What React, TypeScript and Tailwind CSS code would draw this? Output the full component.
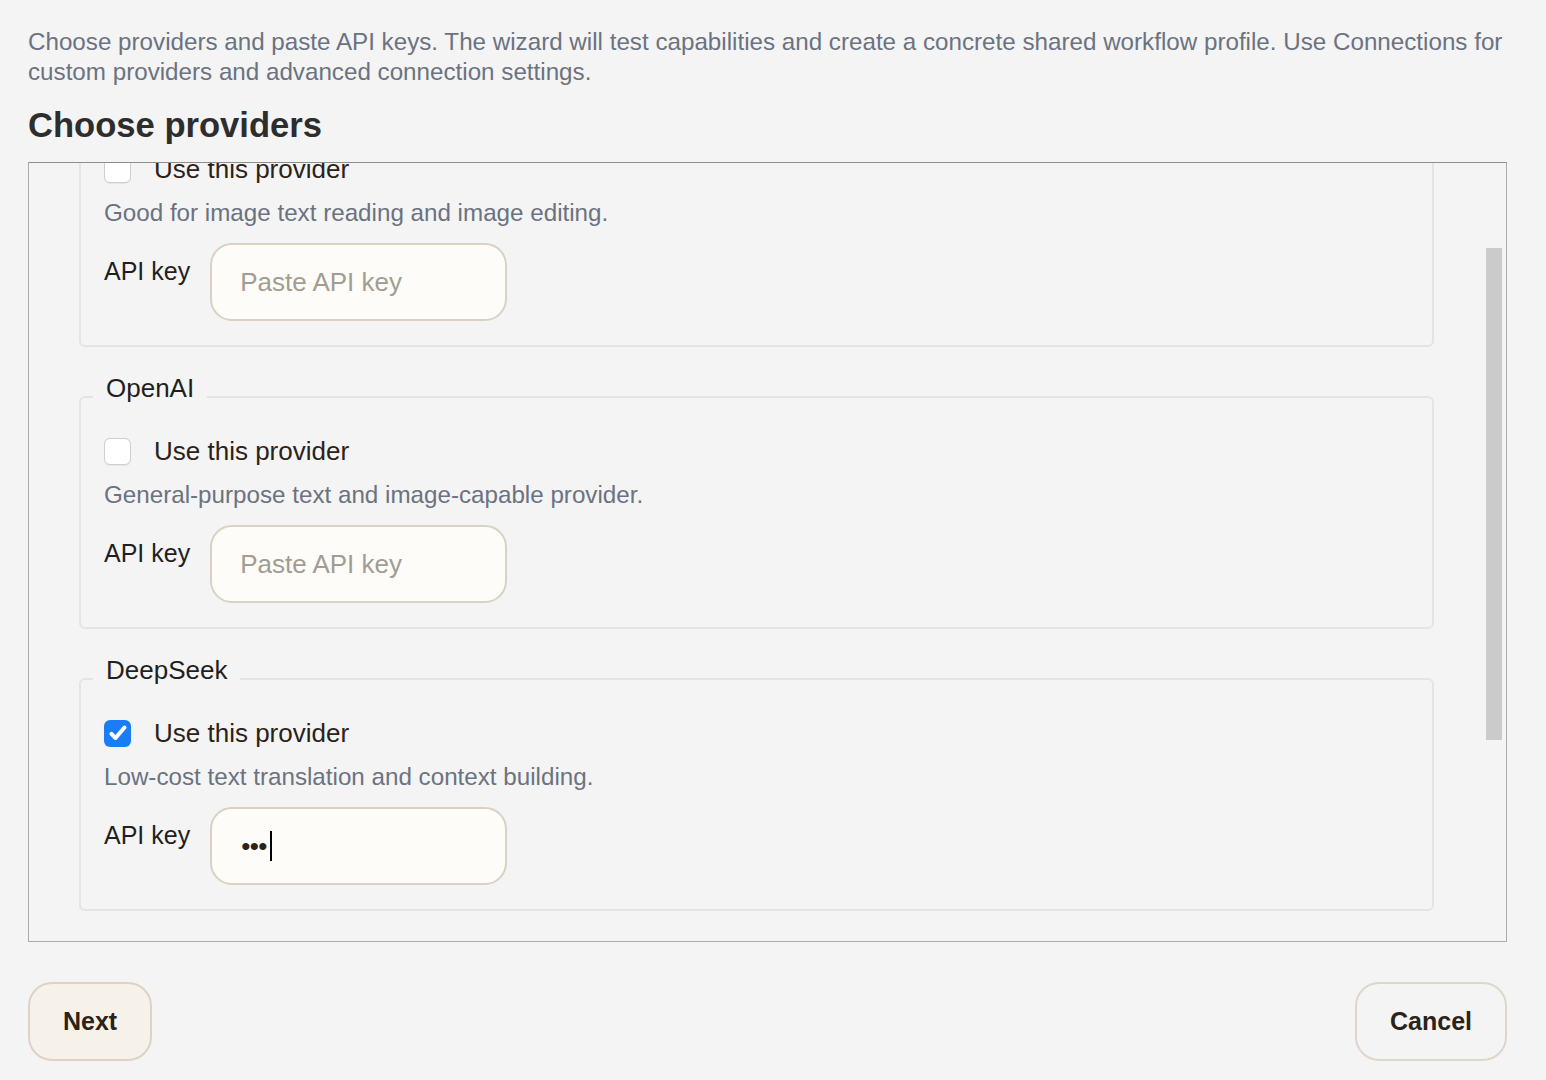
import React from "react";

type Provider = {
  name: string;
  description: string;
  enabled: boolean;
  key: string;
};

// providers shown in the wizard (the first one is scrolled out of view)
const providers: Provider[] = [
  { name: "Google Gemini", description: "Good for image text reading and image editing.", enabled: false, key: "" },
  { name: "OpenAI", description: "General-purpose text and image-capable provider.", enabled: false, key: "" },
  { name: "DeepSeek", description: "Low-cost text translation and context building.", enabled: true, key: "abc" },
];

const Checkbox = ({ checked }: { checked: boolean }) => {
  if (checked) {
    return (
      <span className="flex h-[27px] w-[27px] shrink-0 items-center justify-center rounded-[6px] bg-[#1a7df5]">
        <svg viewBox="0 0 24 24" className="h-[24px] w-[24px]" fill="none" stroke="white" strokeWidth={4} strokeLinecap="round" strokeLinejoin="round">
          <path d="M5.5 12.8l4 4.2L18.5 6.5" />
        </svg>
      </span>
    );
  }
  return <span className="block h-[27px] w-[27px] shrink-0 rounded-[6px] border border-[#cfcfcf] bg-white shadow-[0_0.5px_1px_rgba(0,0,0,0.06)]" />;
};

const ProviderCard = ({ p }: { p: Provider }) => {
  return (
    <fieldset className="rounded-[6px] border-2 border-[#e4e4e4] px-[23px] pt-[15px] pb-[24px]">
      <legend className="ml-[-11px] px-[13px] pb-[18px] text-[26px] leading-[30px] text-[#1f1f1f]">{p.name}</legend>
      <label className="flex h-[30px] items-center gap-[23px]">
        <Checkbox checked={p.enabled} />
        <span className="text-[26px] leading-[30px] text-[#2b2219]">Use this provider</span>
      </label>
      <p className="mt-[14px] text-[24.2px] leading-[30px] text-[#6b7280]">{p.description}</p>
      <div className="mt-[15px] flex items-start">
        <span className="mr-[20px] pt-[13px] text-[25px] leading-[30px] text-[#1f1f1f]">API key</span>
        {p.key ? (
          <div className="flex h-[78px] w-[297px] items-center rounded-[22px] border-2 border-[#dad1c4] bg-[#fdfcf8] pl-[29px]">
            <span className="text-[26px] leading-[30px] tracking-[-0.5px] text-[#2b2219]">•••</span>
            <span className="ml-[3px] block h-[30px] w-[2px] bg-black" />
          </div>
        ) : (
          <input
            type="password"
            placeholder="Paste API key"
            className="h-[78px] w-[297px] rounded-[22px] border-2 border-[#dad1c4] bg-[#fdfcf8] pl-[28px] text-[26px] text-[#2b2219] outline-none placeholder:text-[#a29c93]"
          />
        )}
      </div>
    </fieldset>
  );
};

export default function App() {
  return (
    <div className="min-h-[1080px] bg-[#f4f4f4] pt-[27px] pl-[28px] pr-[39px] font-['Liberation_Sans',Arial,sans-serif]">
      <p className="text-[24.2px] leading-[30px] text-[#6b7280]">
        Choose providers and paste API keys. The wizard will test capabilities and create a concrete shared workflow profile. Use Connections for custom providers and advanced connection settings.
      </p>
      <h2 className="mt-[18px] text-[34.6px] font-bold leading-[40px] text-[#2d2d2d]">Choose providers</h2>

      {/* scrollable provider list */}
      <div className="relative mt-[17px] h-[780px] overflow-hidden border border-[#ababab] border-t-[#8e8e8e]">
        <div className="mt-[-72px] flex flex-col gap-[26px] pl-[50px] pr-[72px]">
          {providers.map((p) => (
            <ProviderCard key={p.name} p={p} />
          ))}
        </div>
        <div className="absolute right-[4px] top-[85px] h-[492px] w-[16px] bg-[#cbcbcb]" />
      </div>

      <div className="mt-[40px] flex items-center justify-between">
        <button className="h-[79px] rounded-[24px] border-2 border-[#dcd3c6] bg-[#f6f2ea] px-[33px] text-[25px] font-bold text-[#2b2219]">
          Next
        </button>
        <button className="h-[79px] rounded-[24px] border-2 border-[#dfd6ca] bg-transparent px-[33px] text-[25px] font-bold text-[#2b2219]">
          Cancel
        </button>
      </div>
    </div>
  );
}
